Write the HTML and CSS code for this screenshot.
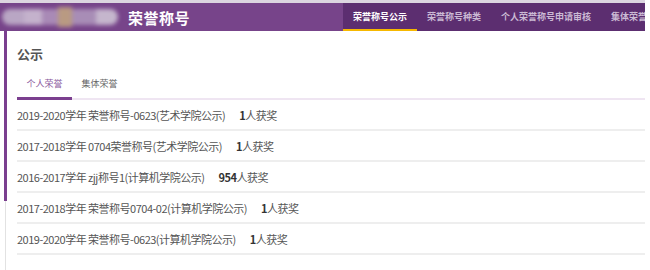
FILE: index.html
```html
<!DOCTYPE html>
<html lang="zh-CN">
<head>
  <meta charset="UTF-8" />
  <title>荣誉称号</title>
  <link rel="stylesheet" href="styles.css">
</head>
<body>
  <div class="page">
    <div class="topline"></div>
    <div class="header">
      <div class="logo">
        <span class="px a"></span><span class="px b"></span><span class="px c"></span><span class="px d"></span><span class="px e"></span><span class="px f"></span>
      </div>
      <div class="title">荣誉称号</div>
      <div class="nav">
        <a class="nav-item active">荣誉称号公示</a>
        <a class="nav-item">荣誉称号种类</a>
        <a class="nav-item">个人荣誉称号申请审核</a>
        <a class="nav-item">集体荣誉称号申请审核</a>
      </div>
    </div>

    <div class="body-wrap">
      <div class="rail"></div>
      <div class="main">
        <h2>公示</h2>
        <div class="tabs">
          <span class="tab active">个人荣誉</span>
          <span class="tab">集体荣誉</span>
        </div>
        <ul class="list">
          <li>2019-2020学年 荣誉称号-0623(艺术学院公示)<span class="count"><b>1</b>人获奖</span></li>
          <li>2017-2018学年 0704荣誉称号(艺术学院公示)<span class="count"><b>1</b>人获奖</span></li>
          <li>2016-2017学年 zjj称号1(计算机学院公示)<span class="count"><b>954</b>人获奖</span></li>
          <li>2017-2018学年 荣誉称号0704-02(计算机学院公示)<span class="count"><b>1</b>人获奖</span></li>
          <li>2019-2020学年 荣誉称号-0623(计算机学院公示)<span class="count"><b>1</b>人获奖</span></li>
        </ul>
      </div>
    </div>
  </div>
</body>
</html>
```

FILE: styles.css
```css
body {
  margin: 0;
  background: #fff;
  font-family: "Noto Sans CJK SC", "Noto Sans", sans-serif;
  color: #555;
}
.page {
  width: 645px;
}
.topline {
  height: 3px;
  background: #dcd5e0;
}
.header {
  display: flex;
  align-items: center;
  height: 28px;
  background: #77448a;
}
.logo {
  display: flex;
  align-items: center;
  width: 118px;
  height: 22px;
  margin-left: 2px;
  filter: blur(2px);
}
.px {
  display: block;
  height: 16px;
}
.px.a { width: 22px; background: #b9a6c4; border-radius: 8px 0 0 8px; }
.px.b { width: 18px; background: #c4b2cc; }
.px.c { width: 16px; background: #a98ab6; }
.px.d { width: 14px; background: #b99a82; height: 20px; }
.px.e { width: 24px; background: #a88db6; }
.px.f { width: 22px; background: #c5b6cd; border-radius: 0 10px 10px 0; }
.title {
  margin-left: 8px;
  color: #fff;
  font-size: 15px;
  font-weight: bold;
  letter-spacing: 0.5px;
}
.nav {
  display: flex;
  align-self: stretch;
  margin-left: auto;
  width: 302px;
  background: #5c2e70;
  overflow: hidden;
  white-space: nowrap;
}
.nav-item {
  display: flex;
  flex-shrink: 0;
  align-items: center;
  padding: 0 10px;
  font-size: 9px;
  font-weight: bold;
  color: #cbbad4;
  border-bottom: 2px solid transparent;
}
.nav-item.active {
  color: #fff;
  border-bottom-color: #f6b800;
}
.body-wrap {
  display: flex;
  min-height: 239px;
}
.rail {
  width: 3px;
  margin-left: 4px;
  background:
    linear-gradient(#7a3f8f, #7a3f8f) top left / 3px 170px no-repeat,
    linear-gradient(#e2e2e2, #e2e2e2) center / 1px 100% no-repeat;
}
.main {
  flex: 1;
  padding-left: 10px;
}
h2 {
  margin: 0;
  padding-top: 13px;
  height: 26px;
  font-size: 13px;
  font-weight: bold;
  color: #555;
}
.tabs {
  display: flex;
  height: 28px;
  border-bottom: 2px solid #efe5f2;
}
.tab {
  display: flex;
  align-items: center;
  justify-content: center;
  width: 55px;
  margin-bottom: -2px;
  font-size: 9px;
  color: #666;
  border-bottom: 3px solid transparent;
}
.tab.active {
  color: #8b5a9e;
  border-bottom-color: #7b3f8f;
}
.list {
  list-style: none;
  margin: 0;
  padding: 0;
}
.list li {
  display: flex;
  align-items: center;
  height: 29px;
  border-bottom: 2px solid #eeeeee;
  font-size: 11px;
  letter-spacing: -0.5px;
  color: #555;
}
.count {
  margin-left: 14px;
}
.count b {
  color: #333;
}
```
